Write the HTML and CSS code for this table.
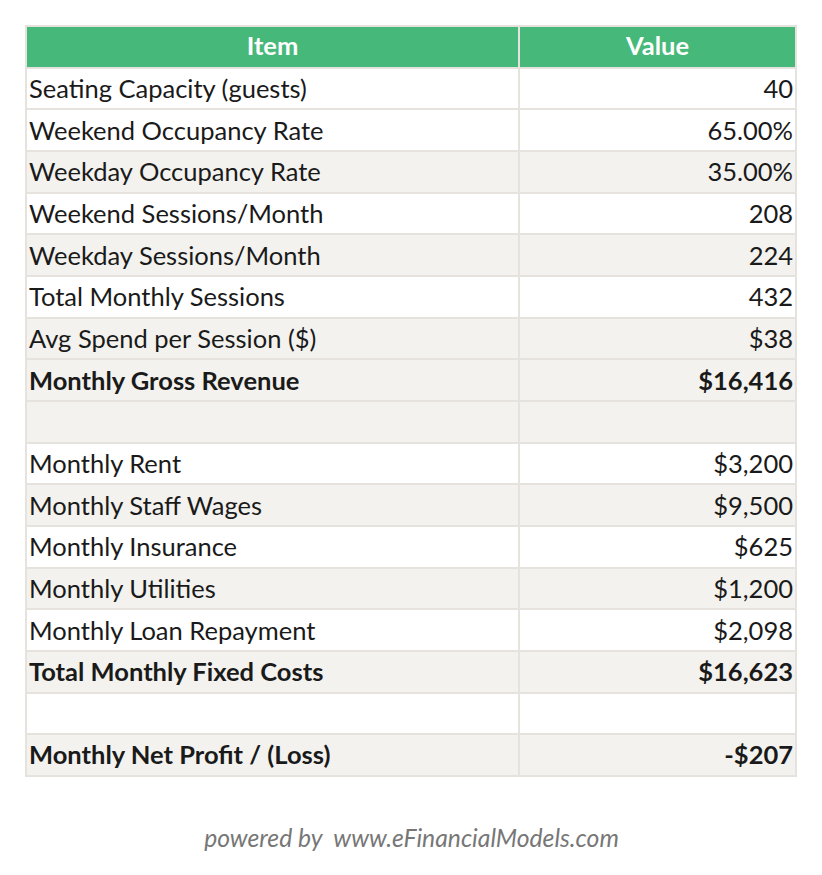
FILE: index.html
```html
<!DOCTYPE html>
<html lang="en">

<head>
    <meta charset="UTF-8">
    <meta name="viewport" content="width=device-width, initial-scale=1.0">
    <title>Restaurant Break-even Summary</title>
    <link rel="stylesheet" href="styles.css">
</head>

<body>
    <div class="container">
        <table class="summary">
            <thead>
                <tr>
                    <th class="col-item">Item</th>
                    <th class="col-value">Value</th>
                </tr>
            </thead>
            <tbody>
                <tr><td>Seating Capacity (guests)</td><td class="num">40</td></tr>
                <tr><td>Weekend Occupancy Rate</td><td class="num">65.00%</td></tr>
                <tr class="shaded"><td>Weekday Occupancy Rate</td><td class="num">35.00%</td></tr>
                <tr><td>Weekend Sessions/Month</td><td class="num">208</td></tr>
                <tr class="shaded"><td>Weekday Sessions/Month</td><td class="num">224</td></tr>
                <tr><td>Total Monthly Sessions</td><td class="num">432</td></tr>
                <tr class="shaded"><td>Avg Spend per Session ($)</td><td class="num">$38</td></tr>
                <tr class="shaded total"><td>Monthly Gross Revenue</td><td class="num">$16,416</td></tr>
                <tr class="shaded"><td></td><td></td></tr>
                <tr><td>Monthly Rent</td><td class="num">$3,200</td></tr>
                <tr class="shaded"><td>Monthly Staff Wages</td><td class="num">$9,500</td></tr>
                <tr><td>Monthly Insurance</td><td class="num">$625</td></tr>
                <tr class="shaded"><td>Monthly Utilities</td><td class="num">$1,200</td></tr>
                <tr><td>Monthly Loan Repayment</td><td class="num">$2,098</td></tr>
                <tr class="shaded total"><td>Total Monthly Fixed Costs</td><td class="num">$16,623</td></tr>
                <tr><td></td><td></td></tr>
                <tr class="shaded total"><td>Monthly Net Profit / (Loss)</td><td class="num">-$207</td></tr>
            </tbody>
        </table>

        <p class="powered">powered by&nbsp; www.eFinancialModels.com</p>
    </div>
</body>

</html>
```

FILE: styles.css
```css
body {
    font-family: Lato, "Open Sans", sans-serif;
    background-color: #fff;
    margin: 0;
    padding: 0;
    color: #1a1a1a;
}

.container {
    padding: 25px 24px 0 25px;
}

.summary {
    width: 772px;
    border-collapse: collapse;
    font-size: 25.5px;
}

.summary th, .summary td {
    border: 2px solid #e6e3de;
    height: 41.67px;
    padding: 0 2px 1px 2px;
    line-height: 30px;
    box-sizing: border-box;
}

.summary th {
    background-color: #46b97a;
    color: #fff;
    font-weight: bold;
    text-align: center;
    padding-bottom: 3px;
}

.col-item {
    width: 493px;
}

.summary .shaded {
    background-color: #f3f2ee;
}

.summary .num {
    text-align: right;
}

.summary .total td {
    font-weight: bold;
}

.powered {
    margin: 46px 0 0 0;
    text-align: center;
    font-style: italic;
    font-size: 24.7px;
    color: #777;
}
```
